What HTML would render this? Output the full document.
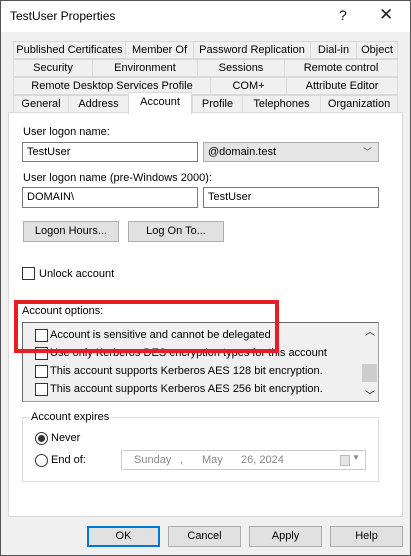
<!DOCTYPE html><html><head><style>
*{box-sizing:border-box;margin:0;padding:0}
body{width:411px;height:556px;overflow:hidden;font-family:"Liberation Sans",sans-serif;font-size:11px;color:#000;background:#f0f0f0;position:relative}
.a{position:absolute}
.win{left:0;top:0;width:411px;height:556px;border:1px solid #555}
.tab{position:absolute;height:18px;border:1px solid #d9d9d9;background:#f0f0f0;text-align:center;line-height:16px;white-space:nowrap}
.box{position:absolute;border:1px solid #7a7a7a;background:#fff;padding-left:4px;line-height:18px}
.btn{position:absolute;border:1px solid #adadad;background:#e1e1e1;text-align:center;line-height:18px}
.cb{position:absolute;width:13px;height:13px;border:1px solid #333;background:#fff}
.t{position:absolute;white-space:nowrap}
</style></head><body>
<div class="a win"></div>
<div class="a" style="left:1px;top:1px;width:409px;height:31px;background:#fff"></div>
<div class="t" style="left:10px;top:9px;font-size:12px">TestUser Properties</div>
<div class="t" style="left:339px;top:7px;font-size:14px">?</div>
<div class="t" style="left:379px;top:5px;font-size:17px;font-weight:100;color:#222">✕</div>

<div class="tab" style="left:13px;top:41px;width:113px">Published Certificates</div>
<div class="tab" style="left:125px;top:41px;width:69px">Member Of</div>
<div class="tab" style="left:193px;top:41px;width:118px">Password Replication</div>
<div class="tab" style="left:310px;top:41px;width:47px">Dial-in</div>
<div class="tab" style="left:356px;top:41px;width:42px">Object</div>
<div class="tab" style="left:13px;top:59px;width:80px">Security</div>
<div class="tab" style="left:92px;top:59px;width:106px">Environment</div>
<div class="tab" style="left:197px;top:59px;width:88px">Sessions</div>
<div class="tab" style="left:284px;top:59px;width:114px">Remote control</div>
<div class="tab" style="left:13px;top:77px;width:198px">Remote Desktop Services Profile</div>
<div class="tab" style="left:210px;top:77px;width:77px">COM+</div>
<div class="tab" style="left:286px;top:77px;width:112px">Attribute Editor</div>
<div class="a" style="left:8px;top:112px;width:395px;height:405px;background:#fff;border:1px solid #d9d9d9"></div>
<div class="tab" style="left:13px;top:95px;width:56px">General</div>
<div class="tab" style="left:68px;top:95px;width:61px">Address</div>
<div class="tab" style="left:192px;top:95px;width:51px">Profile</div>
<div class="tab" style="left:242px;top:95px;width:79px">Telephones</div>
<div class="tab" style="left:320px;top:95px;width:78px">Organization</div>
<div class="tab" style="left:128px;top:92px;width:64px;height:22px;background:#fff;border-bottom:none;line-height:18px">Account</div>

<div class="t" style="left:23px;top:126px">User logon name:</div>
<div class="box" style="left:22px;top:142px;width:176px;height:20px">TestUser</div>
<div class="box" style="left:203px;top:142px;width:176px;height:20px;background:#e5e5e5;border-color:#adadad">@domain.test<span class="t" style="right:6px;top:0;font-size:9px;color:#555">﹀</span></div>
<div class="t" style="left:23px;top:172px">User logon name (pre-Windows 2000):</div>
<div class="box" style="left:22px;top:187px;width:176px;height:21px">DOMAIN\</div>
<div class="box" style="left:203px;top:187px;width:176px;height:21px">TestUser</div>
<div class="btn" style="left:23px;top:221px;width:96px;height:21px">Logon Hours...</div>
<div class="btn" style="left:128px;top:221px;width:96px;height:21px">Log On To...</div>
<div class="cb" style="left:22px;top:267px"></div>
<div class="t" style="left:39px;top:268px">Unlock account</div>

<div class="t" style="left:22px;top:305px">Account options:</div>
<div class="a" style="left:22px;top:322px;width:357px;height:80px;background:#f0f0f0;border:1px solid #a0a0a0;border-left-color:#696969;border-top-color:#696969;overflow:hidden">
<div class="cb" style="left:12px;top:6px"></div><div class="t" style="left:27px;top:6px">Account is sensitive and cannot be delegated</div>
<div class="cb" style="left:12px;top:24px"></div><div class="t" style="left:27px;top:24px">Use only Kerberos DES encryption types for this account</div>
<div class="cb" style="left:12px;top:42px"></div><div class="t" style="left:27px;top:42px">This account supports Kerberos AES 128 bit encryption.</div>
<div class="cb" style="left:12px;top:60px"></div><div class="t" style="left:27px;top:60px">This account supports Kerberos AES 256 bit encryption.</div>
<div class="a" style="left:338px;top:0;width:17px;height:78px;background:#f0f0f0"></div>
<div class="t" style="left:342px;top:0px;font-size:10px">︿</div>
<div class="a" style="left:339px;top:41px;width:15px;height:18px;background:#cdcdcd"></div>
<div class="t" style="left:342px;top:64px;font-size:10px">﹀</div>
</div>
<div class="a" style="left:14px;top:300px;width:265px;height:53px;border:4px solid #e81c24"></div>

<div class="a" style="left:22px;top:417px;width:357px;height:65px;border:1px solid #dcdcdc"></div>
<div class="t" style="left:29px;top:411px;background:#fff;padding:0 2px">Account expires</div>
<div class="a" style="left:35px;top:432px;width:13px;height:13px;border:1px solid #333;border-radius:50%;background:#fff"><div class="a" style="left:2px;top:2px;width:7px;height:7px;border-radius:50%;background:#333"></div></div>
<div class="t" style="left:51px;top:432px">Never</div>
<div class="a" style="left:35px;top:454px;width:13px;height:13px;border:1px solid #333;border-radius:50%;background:#fff"></div>
<div class="t" style="left:51px;top:454px">End of:</div>
<div class="a" style="left:121px;top:450px;width:245px;height:20px;border:1px solid #ccc;color:#888">
<span class="t" style="left:12px;top:3px">Sunday</span><span class="t" style="left:58px;top:3px">,</span><span class="t" style="left:80px;top:3px">May</span><span class="t" style="left:119px;top:3px">26, 2024</span><span class="t" style="left:218px;top:4px;width:10px;height:11px;border:1px solid #bbb;background:#e5e5e5"></span><span class="t" style="left:230px;top:2px;font-size:8px">▼</span></div>

<div class="btn" style="left:87px;top:526px;width:73px;height:21px;border:2px solid #0078d7;line-height:17px">OK</div>
<div class="btn" style="left:168px;top:526px;width:73px;height:21px">Cancel</div>
<div class="btn" style="left:249px;top:526px;width:73px;height:21px">Apply</div>
<div class="btn" style="left:330px;top:526px;width:73px;height:21px">Help</div>
</body></html>
